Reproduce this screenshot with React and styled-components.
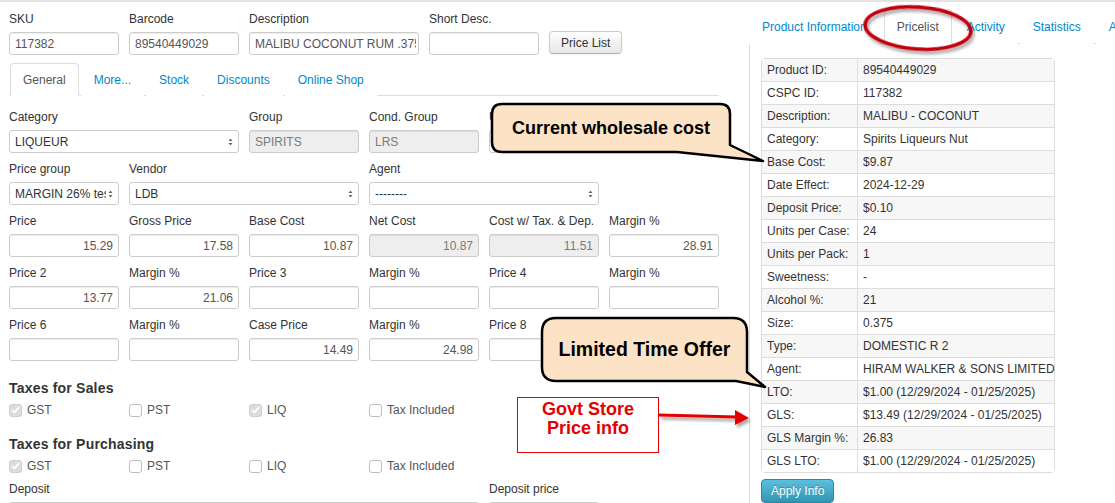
import styled, { createGlobalStyle } from 'styled-components';

const GlobalStyle = createGlobalStyle`
  html, body {
    margin: 0;
    padding: 0;
    background: #fff;
  }
  body {
    font-family: "Liberation Sans", Arial, sans-serif;
    font-size: 12px;
    color: #333;
  }
`;

const Page = styled.div`
  position: relative;
  width: 1115px;
  height: 503px;
  overflow: hidden;
  display: flex;
  align-items: flex-start;
  box-shadow: inset 0 2px 0 #e2e2e2;
`;

/* ---------- product editor (left) ---------- */

const Editor = styled.div`
  width: 710px;
  flex-shrink: 0;
  padding: 10px 0 0 9px;
`;

const TopRow = styled.div`
  display: flex;
  align-items: flex-end;
  gap: 10px;
`;

const Field = styled.div`
  display: flex;
  flex-direction: column;
  gap: 4px;
  min-width: 0;
  width: ${(p) => (p.$w ? `${p.$w}px` : 'auto')};
  grid-column: span ${(p) => p.$span || 1};
`;

const Label = styled.label`
  display: block;
  height: 18px;
  line-height: 18px;
  white-space: nowrap;
  color: #333;
`;

const TextInput = styled.input`
  box-sizing: border-box;
  width: 100%;
  height: 23px;
  margin: 0;
  padding: ${(p) => (p.$num ? '0 5px 0 5px' : '0 2px 0 5px')};
  border: 1px solid #ccc;
  border-radius: 3px;
  font: 12px "Liberation Sans", Arial, sans-serif;
  text-align: ${(p) => (p.$num ? 'right' : 'left')};
  color: ${(p) => (p.$off ? '#7a7a7a' : '#555')};
  background: ${(p) => (p.$off ? '#eee' : '#fff')};
  box-shadow: inset 0 1px 1px rgba(0, 0, 0, 0.075);
  outline: none;
`;

const SelectBox = styled.div`
  box-sizing: border-box;
  height: 23px;
  display: flex;
  align-items: center;
  gap: 2px;
  padding: 0 5px 0 5px;
  border: 1px solid #ccc;
  border-radius: 3px;
  background: #fff;
  color: #333;
`;

const SelectValue = styled.span`
  flex: 1;
  min-width: 0;
  overflow: hidden;
  white-space: nowrap;
`;

const PlainButton = styled.button`
  height: 23px;
  margin-bottom: 1px;
  padding: 0 11px;
  font: 12px "Liberation Sans", Arial, sans-serif;
  color: #333;
  background: linear-gradient(#fff, #e6e6e6);
  border: 1px solid #ccc;
  border-bottom-color: #b3b3b3;
  border-radius: 4px;
  box-shadow: 0 1px 2px rgba(0, 0, 0, 0.05);
`;

const TabBar = styled.ul`
  display: flex;
  margin: 8px 0 0;
  padding: 0;
  list-style: none;
  border-bottom: 1px solid #ddd;
`;

const Tab = styled.li`
  margin: 0 2px -1px ${(p) => (p.$first ? '1px' : '0')};
  padding: 8px 12px 7px;
  line-height: 16px;
  white-space: nowrap;
  border: 1px solid ${(p) => (p.$active ? '#ddd' : 'transparent')};
  border-bottom-color: ${(p) => (p.$active ? '#fff' : 'transparent')};
  border-radius: 4px 4px 0 0;
  background: #fff;
  color: ${(p) => (p.$active ? '#555' : '#0088cc')};
`;

const FormGrid = styled.div`
  display: grid;
  grid-template-columns: repeat(6, 110px);
  column-gap: 10px;
  row-gap: 7px;
  margin-top: ${(p) => p.$mt || 0}px;
`;

const SectionTitle = styled.h4`
  margin: ${(p) => p.$mt}px 0 0;
  font-size: 14px;
  line-height: 20px;
  font-weight: bold;
  letter-spacing: 0.2px;
  color: #333;
`;

const CheckRow = styled.div`
  display: grid;
  grid-template-columns: repeat(6, 110px);
  column-gap: 10px;
  margin-top: 2px;
  line-height: 20px;
`;

const CheckItem = styled.div`
  display: flex;
  align-items: center;
  gap: 5px;
  color: #555;
`;

const CheckBox = styled.span`
  box-sizing: border-box;
  width: 13px;
  height: 13px;
  display: flex;
  align-items: center;
  justify-content: center;
  border: 1px solid ${(p) => (p.$on ? '#cfcfcf' : '#bdbdbd')};
  border-radius: 3px;
  background: ${(p) => (p.$on ? '#dcdcdc' : '#fff')};
`;

/* ---------- pricelist panel (right) ---------- */

const Side = styled.div`
  flex: 1;
  min-width: 0;
  margin-left: 30px;
  padding-top: 9px;
`;

const NavTabs = styled.ul`
  display: flex;
  margin: 0;
  padding: 0;
  list-style: none;
  border-bottom: 1px solid #ddd;
`;

const NavTab = styled.li`
  flex-shrink: 0;
  margin: 0 ${(p) => (p.$wide ? 4 : 2)}px -1px 0;
  padding: 9px 12px 8px;
  line-height: 16px;
  white-space: nowrap;
  border: 1px solid ${(p) => (p.$active ? '#ddd' : 'transparent')};
  border-bottom-color: ${(p) => (p.$active ? '#fff' : 'transparent')};
  border-radius: 4px 4px 0 0;
  background: #fff;
  color: ${(p) => (p.$active ? '#555' : '#0088cc')};
`;

const TabPane = styled.div`
  height: 470px;
  padding: 14px 11px 0;
  border-left: 1px solid #ddd;
`;

const InfoTable = styled.table`
  width: 294px;
  table-layout: fixed;
  border-collapse: separate;
  border-spacing: 0;
  border: 1px solid #ddd;
  border-radius: 4px;
`;

const InfoRow = styled.tr`
  background: ${(p) => (p.$odd ? '#f7f7f7' : '#fff')};
`;

const Cell = styled.td`
  padding: ${(p) => (p.$key ? '3px 5px' : '3px 0 3px 5px')};
  line-height: 16px;
  white-space: nowrap;
  color: #333;
  border-top: ${(p) => (p.$first ? 'none' : '1px solid #ddd')};
  border-left: ${(p) => (p.$key ? 'none' : '1px solid #ddd')};
  width: ${(p) => (p.$key ? '85px' : 'auto')};
`;

const ApplyButton = styled.button`
  display: block;
  height: 24px;
  margin-top: 6px;
  padding: 0 9px;
  font: 12px "Liberation Sans", Arial, sans-serif;
  color: #fff;
  text-shadow: 0 -1px 0 rgba(0, 0, 0, 0.25);
  background: linear-gradient(#5bc0de, #2f96b4);
  border: 1px solid #2a87a2;
  border-radius: 4px;
`;

/* ---------- markup layer ---------- */

const Markup = styled.div`
  position: absolute;
  inset: 0;
  z-index: 3;
  pointer-events: none;
`;

const MarkupSvg = styled.svg`
  position: absolute;
  left: 0;
  top: 0;
`;

const BubbleText = styled.div`
  position: absolute;
  left: ${(p) => p.$x}px;
  top: ${(p) => p.$y}px;
  width: ${(p) => p.$w}px;
  height: ${(p) => p.$h}px;
  display: flex;
  align-items: center;
  justify-content: center;
  white-space: nowrap;
  font: bold ${(p) => p.$size}px "Liberation Sans", Arial, sans-serif;
  color: #000;
`;

const NoteBox = styled.div`
  position: absolute;
  left: 517px;
  top: 397px;
  width: 142px;
  height: 56px;
  box-sizing: border-box;
  padding-top: 2px;
  border: 1px solid #e60000;
  background: #fff;
  text-align: center;
  font: bold 18px/19px "Liberation Sans", Arial, sans-serif;
  color: #e60000;
`;

const SelectArrows = () => (
  <svg width="5" height="8" viewBox="0 0 5 8">
    <path d="M0.5 3 L2.5 0.5 L4.5 3 Z M0.5 5 L2.5 7.5 L4.5 5 Z" fill="#666" />
  </svg>
);

const Select = ({ value }) => (
  <SelectBox>
    <SelectValue>{value}</SelectValue>
    <SelectArrows />
  </SelectBox>
);

const Check = ({ on, label }) => (
  <CheckItem>
    <CheckBox $on={on}>
      {on && (
        <svg width="9" height="8" viewBox="0 0 9 8">
          <path d="M1 4.2 L3.5 6.5 L8 1.2" fill="none" stroke="#fff" strokeWidth="1.8" />
        </svg>
      )}
    </CheckBox>
    {label}
  </CheckItem>
);

const priceRows = [
  [
    ['Price', '15.29'],
    ['Gross Price', '17.58'],
    ['Base Cost', '10.87'],
    ['Net Cost', '10.87', true],
    ['Cost w/ Tax. & Dep.', '11.51', true],
    ['Margin %', '28.91'],
  ],
  [
    ['Price 2', '13.77'],
    ['Margin %', '21.06'],
    ['Price 3', ''],
    ['Margin %', ''],
    ['Price 4', ''],
    ['Margin %', ''],
  ],
  [
    ['Price 6', ''],
    ['Margin %', ''],
    ['Case Price', '14.49'],
    ['Margin %', '24.98'],
    ['Price 8', ''],
    ['Margin %', ''],
  ],
];

const pricelist = [
  ['Product ID:', '89540449029'],
  ['CSPC ID:', '117382'],
  ['Description:', 'MALIBU - COCONUT'],
  ['Category:', 'Spirits Liqueurs Nut'],
  ['Base Cost:', '$9.87'],
  ['Date Effect:', '2024-12-29'],
  ['Deposit Price:', '$0.10'],
  ['Units per Case:', '24'],
  ['Units per Pack:', '1'],
  ['Sweetness:', '-'],
  ['Alcohol %:', '21'],
  ['Size:', '0.375'],
  ['Type:', 'DOMESTIC R 2'],
  ['Agent:', 'HIRAM WALKER & SONS LIMITED'],
  ['LTO:', '$1.00 (12/29/2024 - 01/25/2025)'],
  ['GLS:', '$13.49 (12/29/2024 - 01/25/2025)'],
  ['GLS Margin %:', '26.83'],
  ['GLS LTO:', '$1.00 (12/29/2024 - 01/25/2025)'],
];

export default function App() {
  return (
    <>
      <GlobalStyle />
      <Page>
        <Editor>
          <TopRow>
            <Field $w={110}>
              <Label>SKU</Label>
              <TextInput readOnly value="117382" />
            </Field>
            <Field $w={110}>
              <Label>Barcode</Label>
              <TextInput readOnly value="89540449029" />
            </Field>
            <Field $w={170}>
              <Label>Description</Label>
              <TextInput readOnly value="MALIBU COCONUT RUM .375" />
            </Field>
            <Field $w={110}>
              <Label>Short Desc.</Label>
              <TextInput readOnly value="" />
            </Field>
            <PlainButton>Price List</PlainButton>
          </TopRow>

          <TabBar>
            <Tab $active $first>General</Tab>
            <Tab>More...</Tab>
            <Tab>Stock</Tab>
            <Tab>Discounts</Tab>
            <Tab>Online Shop</Tab>
          </TabBar>

          <FormGrid $mt={12}>
            <Field $span={2}>
              <Label>Category</Label>
              <Select value="LIQUEUR" />
            </Field>
            <Field>
              <Label>Group</Label>
              <TextInput readOnly $off value="SPIRITS" />
            </Field>
            <Field>
              <Label>Cond. Group</Label>
              <TextInput readOnly $off value="LRS" />
            </Field>
            <Field $span={2}>
              <Label>Unit</Label>
              <TextInput readOnly value="" />
            </Field>

            <Field>
              <Label>Price group</Label>
              <Select value="MARGIN 26% test" />
            </Field>
            <Field $span={2}>
              <Label>Vendor</Label>
              <Select value="LDB" />
            </Field>
            <Field $span={2}>
              <Label>Agent</Label>
              <Select value="--------" />
            </Field>
            <div />

            {priceRows.map((row, i) =>
              row.map(([label, value, off], j) => (
                <Field key={`${i}-${j}`}>
                  <Label>{label}</Label>
                  <TextInput readOnly $num $off={off} value={value} />
                </Field>
              ))
            )}
          </FormGrid>

          <SectionTitle $mt={17}>Taxes for Sales</SectionTitle>
          <CheckRow>
            <Check on label="GST" />
            <Check label="PST" />
            <Check on label="LIQ" />
            <Check label="Tax Included" />
          </CheckRow>

          <SectionTitle $mt={14}>Taxes for Purchasing</SectionTitle>
          <CheckRow>
            <Check on label="GST" />
            <Check label="PST" />
            <Check label="LIQ" />
            <Check label="Tax Included" />
          </CheckRow>

          <FormGrid $mt={4}>
            <Field $span={4}>
              <Label>Deposit</Label>
              <Select value="" />
            </Field>
            <Field>
              <Label>Deposit price</Label>
              <TextInput readOnly $num $off value="0.10" />
            </Field>
          </FormGrid>
        </Editor>

        <Side>
          <NavTabs>
            <NavTab $wide>Product Information</NavTab>
            <NavTab $active>Pricelist</NavTab>
            <NavTab>Activity</NavTab>
            <NavTab>Statistics</NavTab>
            <NavTab>Audit</NavTab>
          </NavTabs>
          <TabPane>
            <InfoTable>
              <tbody>
                {pricelist.map(([k, v], i) => (
                  <InfoRow key={k} $odd={i % 2 === 0}>
                    <Cell $key $first={i === 0}>{k}</Cell>
                    <Cell $first={i === 0}>{v}</Cell>
                  </InfoRow>
                ))}
              </tbody>
            </InfoTable>
            <ApplyButton>Apply Info</ApplyButton>
          </TabPane>
        </Side>

        <Markup>
          <MarkupSvg width="1115" height="503" viewBox="0 0 1115 503">
            <defs>
              <filter id="shade" x="-20%" y="-30%" width="150%" height="180%">
                <feDropShadow dx="2" dy="3" stdDeviation="1.5" floodColor="#000" floodOpacity="0.35" />
              </filter>
            </defs>
            <path
              d="M502,104 H720 Q730,104 730,114 V145 L763,161 L677,152 H502 Q492,152 492,142 V114 Q492,104 502,104 Z"
              fill="#fde3c6"
              stroke="#000"
              strokeWidth="2.5"
              strokeLinejoin="round"
            />
            <path
              d="M556,318 H733 Q747,318 747,332 V372 L765,387 L736,381 H556 Q542,381 542,367 V332 Q542,318 556,318 Z"
              fill="#fde3c6"
              stroke="#000"
              strokeWidth="2.5"
              strokeLinejoin="round"
            />
            <ellipse
              cx="918"
              cy="28"
              rx="53"
              ry="21"
              transform="rotate(4 918 28)"
              fill="none"
              stroke="#c20010"
              strokeWidth="3.5"
              filter="url(#shade)"
            />
            <g filter="url(#shade)">
              <line x1="659" y1="415" x2="737" y2="417" stroke="#e60000" strokeWidth="3" />
              <polygon points="735,410 749,418 735,425" fill="#e60000" />
            </g>
          </MarkupSvg>
          <BubbleText $x={492} $y={104} $w={238} $h={48} $size={18}>
            Current wholesale cost
          </BubbleText>
          <BubbleText $x={542} $y={318} $w={205} $h={63} $size={19.5}>
            Limited Time Offer
          </BubbleText>
          <NoteBox>
            Govt Store
            <br />
            Price info
          </NoteBox>
        </Markup>
      </Page>
    </>
  );
}
